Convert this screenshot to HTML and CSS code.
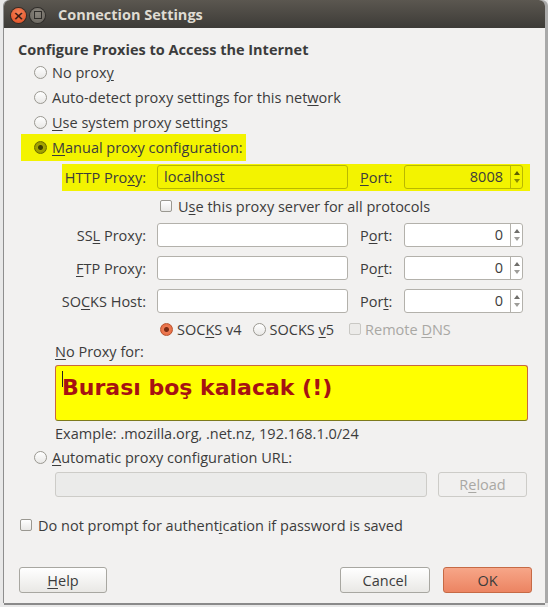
FILE: index.html
```html
<!DOCTYPE html>
<html lang="en">
<head>
    <meta charset="UTF-8">
    <meta name="viewport" content="width=device-width, initial-scale=1.0">
    <title>Connection Settings</title>
    <link rel="stylesheet" href="styles.css">
</head>
<body>
<div class="window">
    <div class="titlebar">
        <span class="wbtn close">&#215;</span>
        <span class="wbtn maxi"><span class="sq"></span></span>
        <span class="title">Connection Settings</span>
    </div>

    <div class="content">
        <div class="heading">Configure Proxies to Access the Internet</div>

        <div class="options">
            <div class="radio-row"><span class="radio"></span><span>No prox<u>y</u></span></div>
            <div class="radio-row"><span class="radio"></span><span>Auto-detect proxy settings for this net<u>w</u>ork</span></div>
            <div class="radio-row"><span class="radio"></span><span><u>U</u>se system proxy settings</span></div>
            <div class="radio-row hl"><span class="radio on-hl"></span><span><u>M</u>anual proxy configuration:</span></div>
        </div>

        <!-- proxy rows -->
        <div class="proxies">
            <div class="prow hl-row">
                <span class="plabel"><span>HTTP Pro<u>x</u>y:</span></span>
                <span class="field yellow">localhost</span>
                <span class="portlabel"><u>P</u>ort:</span>
                <span class="spin yellow"><span class="spin-val">8008</span><span class="spin-btns"><span class="up"></span><span class="down"></span></span></span>
            </div>
            <div class="checkrow"><span class="check"></span><span>U<u>s</u>e this proxy server for all protocols</span></div>
            <div class="prow ssl">
                <span class="plabel"><span>SS<u>L</u> Proxy:</span></span>
                <span class="field"></span>
                <span class="portlabel">P<u>o</u>rt:</span>
                <span class="spin"><span class="spin-val">0</span><span class="spin-btns"><span class="up"></span><span class="down"></span></span></span>
            </div>
            <div class="prow">
                <span class="plabel"><span><u>F</u>TP Proxy:</span></span>
                <span class="field"></span>
                <span class="portlabel">Po<u>r</u>t:</span>
                <span class="spin"><span class="spin-val">0</span><span class="spin-btns"><span class="up"></span><span class="down"></span></span></span>
            </div>
            <div class="prow">
                <span class="plabel"><span>SO<u>C</u>KS Host:</span></span>
                <span class="field"></span>
                <span class="portlabel">Por<u>t</u>:</span>
                <span class="spin"><span class="spin-val">0</span><span class="spin-btns"><span class="up"></span><span class="down"></span></span></span>
            </div>
            <div class="socksrow">
                <span class="radio checked"></span><span class="v4">SOC<u>K</u>S v4</span>
                <span class="radio"></span><span class="v5">SOCKS <u>v</u>5</span>
                <span class="check disabled"></span><span class="muted">Remote <u>D</u>NS</span>
            </div>
        </div>

        <div class="lower">
            <div class="noproxy-label"><u>N</u>o Proxy for:</div>
            <div class="noproxy"><span class="caret"></span>Burası boş kalacak (!)</div>
            <div class="example">Example: .mozilla.org, .net.nz, 192.168.1.0/24</div>
        </div>

        <div class="radio-row auto"><span class="radio"></span><span><u>A</u>utomatic proxy configuration URL:</span></div>
        <div class="urlrow">
            <span class="field disabled-field"></span>
            <span class="button disabled-btn">R<u>e</u>load</span>
        </div>

        <div class="checkrow prompt"><span class="check"></span><span>Do not prompt for authent<u>i</u>cation if password is saved</span></div>

        <div class="buttons">
            <span class="button help"><u>H</u>elp</span>
            <span class="spacer"></span>
            <span class="button cancel">Cancel</span>
            <span class="button ok">OK</span>
        </div>
    </div>
</div>
</body>
</html>
```

FILE: styles.css
```css
body {
    margin: 0;
    height: 607px;
    overflow: hidden;
    background: #e8e8e8;
    font-family: "Open Sans", "Noto Sans", sans-serif;
    font-size: 14.5px;
    color: #3c3c3c;
}
u {
    text-decoration: underline;
    text-underline-offset: 2px;
}
.window {
    margin-left: 4px;
    width: 541px;
    height: 603px;
    background: #f2f1f0;
    border-radius: 6px 6px 0 0;
    box-shadow: 3px 0 0 #a9a9a9, -1px 0 0 #8e8e8e, 0 2px 0 #8a8a8a;
    overflow: hidden;
}

/* title bar */
.titlebar {
    height: 28px;
    background: linear-gradient(#5b5750, #3d3b37);
    display: flex;
    align-items: center;
    padding-left: 7px;
    gap: 4px;
}
.wbtn {
    width: 15px;
    height: 15px;
    border-radius: 50%;
    display: flex;
    align-items: center;
    justify-content: center;
    margin-top: 2px;
    flex: none;
}
.close {
    background: radial-gradient(circle at 50% 35%, #f7845a, #df4a1f);
    box-shadow: 0 0 0 1px #3a2a22;
    color: #3b1a10;
    font-size: 13px;
    font-weight: bold;
    line-height: 15px;
    font-family: "DejaVu Sans", sans-serif;
}
.maxi {
    background: radial-gradient(circle at 50% 35%, #8a867e, #66625b);
    box-shadow: 0 0 0 1px #2f2d2a;
}
.maxi .sq {
    width: 6px;
    height: 6px;
    border: 1px solid #2f2d2a;
}
.title {
    margin-left: 9px;
    margin-top: 1px;
    color: #dfdbd2;
    font-weight: bold;
    font-size: 14.5px;
}

/* content */
.heading {
    margin: 12px 0 0 14px;
    height: 20px;
    line-height: 20px;
    font-weight: bold;
}
.radio-row {
    height: 25px;
    display: flex;
    align-items: center;
    padding-left: 30px;
    gap: 5px;
}
.radio-row.hl {
    height: 27px;
    margin: -1px 0;
    margin-left: 17px;
    padding-left: 13px;
    width: 212px;
    background: #f3f300;
}
.radio {
    width: 11px;
    height: 11px;
    border-radius: 50%;
    border: 1px solid #9a9891;
    background: linear-gradient(#ffffff, #e9e8e6);
    flex: none;
}
.radio.checked {
    border-color: #b8532e;
    background: radial-gradient(circle, #7a2c14 0 2px, #ee7a52 3px, #e2643c);
}
.radio.on-hl {
    border-color: #6a6a00;
    background: radial-gradient(circle, #3e3e00 0 2px, #a6a600 3px, #929200);
}
.check {
    width: 10px;
    height: 10px;
    border: 1px solid #9a9891;
    border-radius: 2px;
    background: linear-gradient(#ffffff, #e9e8e6);
    flex: none;
}
.check.disabled {
    border-color: #c9c8c4;
    background: #ecebe9;
}

/* proxy rows */
.proxies {
    margin-top: 4px;
    margin-left: 58px;
}
.prow {
    display: grid;
    grid-template-columns: 84px 191px 34px 119px;
    column-gap: 11px;
    align-items: center;
    height: 24px;
    margin-top: 9px;
}
.prow .portlabel {
    margin-left: 1px;
}
.prow.hl-row {
    height: 24px;
    margin-top: 0;
    padding: 1px 6px 2px 0;
    width: 462px;
    background: #f3f300;
}
.prow.ssl {
    margin-top: 5px;
}
.plabel {
    display: flex;
    justify-content: flex-end;
    white-space: nowrap;
}
.field {
    height: 22px;
    border: 1px solid #b3b1ab;
    border-radius: 3px;
    background: #ffffff;
    padding-left: 6px;
    line-height: 22px;
    box-sizing: content-box;
}
.prow .field {
    width: 183px;
}
.field.yellow, .spin.yellow {
    background: #f3f300;
    border-color: #b9b800;
}
.spin {
    display: flex;
    height: 24px;
    border: 1px solid #b3b1ab;
    border-radius: 3px;
    background: #ffffff;
    box-sizing: border-box;
    width: 119px;
}
.spin-val {
    flex: 1;
    text-align: right;
    padding-right: 7px;
    line-height: 22px;
    border-right: 1px solid #b3b1ab;
}
.spin.yellow .spin-val {
    border-right-color: #b9b800;
}
.spin-btns {
    width: 11px;
    display: flex;
    flex-direction: column;
    align-items: center;
    justify-content: center;
    gap: 4px;
}
.up, .down {
    width: 0;
    height: 0;
    border-left: 3px solid transparent;
    border-right: 3px solid transparent;
}
.up {
    border-bottom: 4px solid #6f6e6a;
}
.down {
    border-top: 4px solid #9e9d99;
}
.spin.yellow .up, .spin.yellow .down {
    border-bottom-color: #5c5c00;
    border-top-color: #8a8a00;
}

.checkrow {
    display: flex;
    align-items: center;
    gap: 6px;
    height: 24px;
    margin-top: 3px;
    padding-left: 98px;
}
.socksrow {
    display: flex;
    align-items: center;
    height: 24px;
    margin-top: 4px;
    padding-left: 98px;
    gap: 4px;
}
.socksrow .v4 {
    margin-right: 7px;
}
.socksrow .v5 {
    margin-right: 11px;
}
.muted {
    color: #a9a8a4;
}

/* lower part */
.lower {
    margin-left: 51px;
}
.noproxy-label {
    margin-top: 1px;
    height: 20px;
    line-height: 20px;
}
.noproxy {
    margin-top: 3px;
    width: 465px;
    height: 44px;
    padding-bottom: 10px;
    border: 1px solid #c8683f;
    border-bottom-color: #7d7a1c;
    border-radius: 3px;
    background: #ffff00;
    color: #a61212;
    font-family: "DejaVu Sans", sans-serif;
    font-weight: bold;
    font-size: 22px;
    line-height: 30px;
    padding-left: 6px;
    display: flex;
    align-items: center;
    position: relative;
}
.caret {
    position: absolute;
    left: 6px;
    top: 5px;
    width: 1px;
    height: 16px;
    background: #222;
}
.example {
    margin-top: 3px;
    height: 20px;
    line-height: 20px;
}
.radio-row.auto {
    margin-top: 1px;
}
.urlrow {
    display: flex;
    gap: 11px;
    margin: 2px 0 0 51px;
    height: 25px;
}
.disabled-field {
    width: 364px;
    height: 23px;
    background: #ebebea;
    border-color: #cdccc8;
}
.button {
    display: flex;
    align-items: center;
    justify-content: center;
    box-sizing: border-box;
    height: 26px;
    border: 1px solid #a8a7a1;
    border-radius: 3px;
    background: linear-gradient(#ffffff, #e9e8e5);
}
.disabled-btn {
    width: 89px;
    height: 25px;
    color: #a9a8a4;
    border-color: #cdccc8;
    background: #f1f0ef;
}
.checkrow.prompt {
    margin-top: 16px;
    padding-left: 16px;
}
.buttons {
    display: flex;
    margin: 30px 0 0 15px;
    width: 513px;
    gap: 13px;
}
.help {
    width: 88px;
}
.spacer {
    flex: 1;
}
.cancel {
    width: 90px;
}
.ok {
    width: 89px;
    border-color: #c66a45;
    background: linear-gradient(#f7a688, #ec8462);
}
```
